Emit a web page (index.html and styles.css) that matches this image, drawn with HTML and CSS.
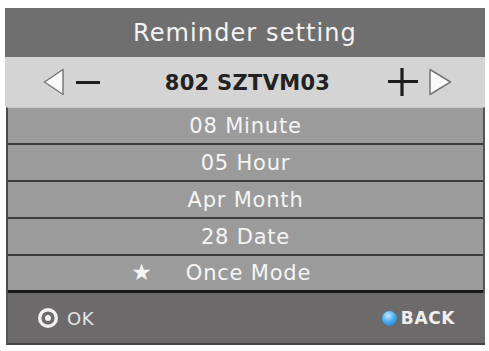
FILE: index.html
```html
<!DOCTYPE html>
<html lang="en">
<head>
<meta charset="UTF-8" />
<title>Reminder setting</title>
<link rel="stylesheet" href="styles.css">
</head>
<body>
<div class="screen">
  <div class="title">Reminder setting</div>

  <div class="channel">
    <div class="ctrl ctrl-left">
      <svg width="22" height="28" viewBox="0 0 22 28"><polygon points="1.5,14 20,1.5 20,26.5" fill="#fafafa" stroke="#777" stroke-width="1.5" stroke-linejoin="round"/></svg>
      <span class="minus"></span>
    </div>
    <div class="channel-name">802 SZTVM03</div>
    <div class="ctrl ctrl-right">
      <svg width="32" height="30" viewBox="0 0 32 30"><path d="M1 14.5H31M15 1V29" stroke="#1c1c1c" stroke-width="3.2"/></svg>
      <svg width="24" height="28" viewBox="0 0 24 28"><polygon points="22.5,14 2,1.5 2,26.5" fill="#fafafa" stroke="#777" stroke-width="1.5" stroke-linejoin="round"/></svg>
    </div>
  </div>

  <div class="rows">
    <div class="row">08 Minute</div>
    <div class="row">05 Hour</div>
    <div class="row">Apr Month</div>
    <div class="row">28 Date</div>
    <div class="row"><span class="mode">Once Mode</span></div>
  </div>

  <div class="footer">
    <div class="hint">
      <svg width="22" height="22" viewBox="0 0 22 22"><circle cx="11" cy="11" r="8.3" fill="none" stroke="#f2f2f2" stroke-width="3.4"/><circle cx="11" cy="11" r="3" fill="#f2f2f2"/></svg>
      <span>OK</span>
    </div>
    <div class="hint back">
      <span class="ball"></span>
      <span>BACK</span>
    </div>
  </div>
</div>
</body>
</html>
```

FILE: styles.css
```css
body {
  margin: 0; background: #fff; font-family: 'DejaVu Sans', 'Liberation Sans', sans-serif;
}
.screen {
  width: 480px; margin: 8px 0 0 5px;
}
.title {
  height: 49px; background: #6f6f6f; color: #f3f3f3; font-size: 24px; letter-spacing: 1.1px;
  display: flex; align-items: center; justify-content: center; padding-top: 1px; box-sizing: border-box;
}
.channel {
  height: 50px; background: #d4d4d4;
  display: grid; grid-template-columns: 1fr auto 1fr; align-items: center;
  padding: 0 33px 0 38px;
}
.ctrl {
  display: flex; align-items: center;
}
.ctrl-left {
  justify-self: start; gap: 11px;
}
.ctrl-right {
  justify-self: end; gap: 9px;
}
.minus {
  display: block; width: 24px; height: 3px; background: #1c1c1c;
}
.channel-name {
  font-size: 21px; font-weight: bold; color: #222; letter-spacing: 0.3px; padding-top: 2px;
}
.rows {
  border-left: 2px solid #4a4a4a; border-right: 2px solid #555; margin-left: 1px;
  border-top: 1px solid #c8c8c8;
}
.row {
  height: 35px; background: #9b9b9b; border-bottom: 2px solid #3c3c3c;
  color: #f5f5f5; font-size: 21px; letter-spacing: 0.8px;
  display: flex; align-items: center; justify-content: center;
}
.row:last-child {
  border-bottom: 3px solid #1a1a1a; height: 34px;
}
.mode {
  position: relative; padding-left: 6px;
}
.mode::before {
  content: '\2605'; position: absolute; right: 100%; margin-right: 28px; top: -2px;
  font-size: 23px; letter-spacing: 0;
}
.footer {
  height: 50px; background: #6c6a6a; border-left: 2px solid #555; border-bottom: 2px solid #444;
  margin-left: 1px;
  display: flex; align-items: center; justify-content: space-between;
  padding: 0 30px 0 29px;
}
.hint {
  display: flex; align-items: center; gap: 8px;
  color: #e4e4e4; font-size: 18px; letter-spacing: 0.6px;
}
.back {
  gap: 4px; font-weight: bold; font-size: 17px; color: #f0f0f0;
}
.ball {
  display: block; width: 15px; height: 15px; border-radius: 50%;
  background: radial-gradient(circle at 40% 30%, #bfe8ff 0%, #4ab0ec 45%, #1b6fb8 100%);
}
```
